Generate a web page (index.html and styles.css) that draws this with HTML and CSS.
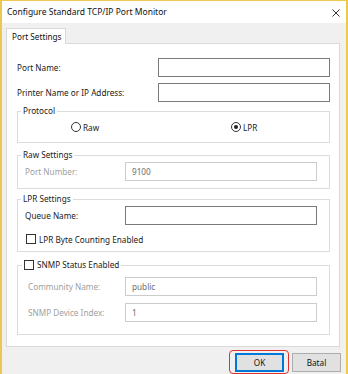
FILE: index.html
```html
<!DOCTYPE html>
<html>
<head>
<meta charset="utf-8">
<link rel="stylesheet" href="styles.css">
</head>
<body>
<div class="window">
  <div class="titlebar">
    <span class="title">Configure Standard TCP/IP Port Monitor</span>
    <svg class="close" width="8" height="8" viewBox="0 0 8 8"><path d="M0.5 0.5 L7.5 7.5 M7.5 0.5 L0.5 7.5" stroke="#333" stroke-width="1"/></svg>
  </div>
  <div class="client">
    <div class="tabs"><div class="tab">Port Settings</div></div>
    <div class="panel">
      <div class="row"><span class="lbl">Port Name:</span><span class="input wide"></span></div>
      <div class="row second"><span class="lbl">Printer Name or IP Address:</span><span class="input wide"></span></div>

      <fieldset class="group protocol">
        <legend>Protocol</legend>
        <div class="radios">
          <span class="radio-item raw"><span class="radio"></span>Raw</span>
          <span class="radio-item"><span class="radio checked"></span>LPR</span>
        </div>
      </fieldset>

      <fieldset class="group rawset">
        <legend>Raw Settings</legend>
        <div class="grow"><span class="lbl dis">Port Number:</span><span class="input dis">9100</span></div>
      </fieldset>

      <fieldset class="group lprset">
        <legend>LPR Settings</legend>
        <div class="grow"><span class="lbl">Queue Name:</span><span class="input"></span></div>
        <div class="check-row"><span class="check"></span>LPR Byte Counting Enabled</div>
      </fieldset>

      <fieldset class="group snmp">
        <legend class="check-legend"><span class="check"></span>SNMP Status Enabled</legend>
        <div class="grow first"><span class="lbl dis ind">Community Name:</span><span class="input dis">public</span></div>
        <div class="grow next"><span class="lbl dis ind">SNMP Device Index:</span><span class="input dis">1</span></div>
      </fieldset>
    </div>
    <div class="buttons">
      <div class="okwrap">
        <span class="btn default">OK</span>
        <span class="ring"></span>
      </div>
      <span class="btn">Batal</span>
    </div>
  </div>
</div>
</body>
</html>
```
FILE: styles.css
```css
html, body {
  margin: 0;
  padding: 0;
}
body {
  width: 348px;
  height: 374px;
  overflow: hidden;
  font-family: "Noto Sans", "Open Sans", sans-serif;
  font-size: 8.2px;
  color: #1a1a1a;
}
.window {
  width: 348px;
  height: 374px;
  box-sizing: border-box;
  border-left: 2px solid #ecc94c;
  border-right: 2px solid #ecc94c;
  border-top: 1px solid #ecc94c;
  background: #f0f0f0;
  display: flex;
  flex-direction: column;
}
.titlebar {
  height: 22px;
  background: #ffffff;
  display: flex;
  align-items: center;
  justify-content: space-between;
  padding: 0 6px 0 5px;
  flex: none;
}
.title {
  font-size: 8.5px;
  color: #111;
  padding-bottom: 1px;
}
.close {
  display: block;
  margin-top: 1px;
}
.client {
  padding: 5px 6px 0 4px;
  flex: 1;
}
.tabs {
  display: flex;
  position: relative;
  z-index: 1;
  margin-bottom: -1px;
}
.tab {
  height: 15px;
  line-height: 15px;
  padding: 0 3px 0 5px;
  background: #fff;
  border: 1px solid #d9d9d9;
  border-bottom: none;
  color: #111;
}
.panel {
  height: 304px;
  box-sizing: border-box;
  background: #fff;
  border: 1px solid #d9d9d9;
  padding: 14px 9px 0 10px;
}
.row {
  display: flex;
  align-items: center;
  justify-content: space-between;
  height: 19px;
}
.row.second {
  margin-top: 6px;
}
.input {
  display: block;
  box-sizing: border-box;
  height: 19px;
  width: 192px;
  border: 1px solid #7a7a7a;
  background: #fff;
  padding-left: 6px;
  line-height: 17px;
  color: #6d6d6d;
}
.input.wide {
  width: 172px;
}
.input.dis {
  border-color: #cccccc;
}
.lbl.dis {
  color: #a0a0a0;
}
.lbl.ind {
  padding-left: 3px;
}
.group {
  margin: 0;
  min-width: 0;
  border: 1px solid #dcdcdc;
  padding: 0 12px 0 7px;
}
.group legend {
  padding: 0 2px;
  margin-left: -4px;
  line-height: 14px;
  height: 14px;
  color: #1a1a1a;
}
.protocol {
  margin-top: 2px;
  padding-bottom: 8px;
}
.radios {
  display: flex;
  align-items: center;
  height: 14px;
  margin-top: 2px;
}
.radio-item {
  display: flex;
  align-items: center;
  gap: 2px;
}
.radio-item.raw {
  width: 160px;
  margin-left: 46px;
}
.radio {
  width: 10px;
  height: 10px;
  box-sizing: border-box;
  border: 1px solid #333;
  border-radius: 50%;
  display: flex;
  align-items: center;
  justify-content: center;
}
.radio.checked::after {
  content: "";
  width: 4px;
  height: 4px;
  border-radius: 50%;
  background: #222;
}
.rawset {
  margin-top: 5px;
  padding-bottom: 7px;
}
.grow {
  display: flex;
  align-items: center;
  justify-content: space-between;
  height: 19px;
}
.lprset {
  margin-top: 3px;
  padding-bottom: 5px;
}
.check-row {
  display: flex;
  align-items: center;
  height: 14px;
  margin-top: 7px;
  gap: 3px;
  padding-left: 1px;
}
.check {
  display: inline-block;
  width: 10px;
  height: 10px;
  box-sizing: border-box;
  border: 1px solid #333;
  background: #fff;
}
.snmp {
  margin-top: 6px;
  padding-bottom: 12px;
}
.group legend.check-legend {
  display: flex;
  align-items: center;
  gap: 3px;
  margin-left: -3px;
}
.grow.first {
  margin-top: 5px;
}
.grow.next {
  margin-top: 7px;
}
.buttons {
  display: flex;
  justify-content: flex-end;
  gap: 8px;
  margin-top: 6px;
  margin-right: -1px;
}
.okwrap {
  position: relative;
  display: flex;
}
.btn {
  display: flex;
  align-items: center;
  justify-content: center;
  width: 49px;
  height: 19px;
  box-sizing: border-box;
  background: #e1e1e1;
  border: 1px solid #adadad;
  color: #111;
}
.btn.default {
  border-color: #0078d7;
  box-shadow: inset 0 0 0 1px #0078d7;
}
.ring {
  position: absolute;
  left: -6px;
  top: -3px;
  right: -5px;
  bottom: -2px;
  border: 1.5px solid #e3312d;
  border-radius: 4px;
}
```
